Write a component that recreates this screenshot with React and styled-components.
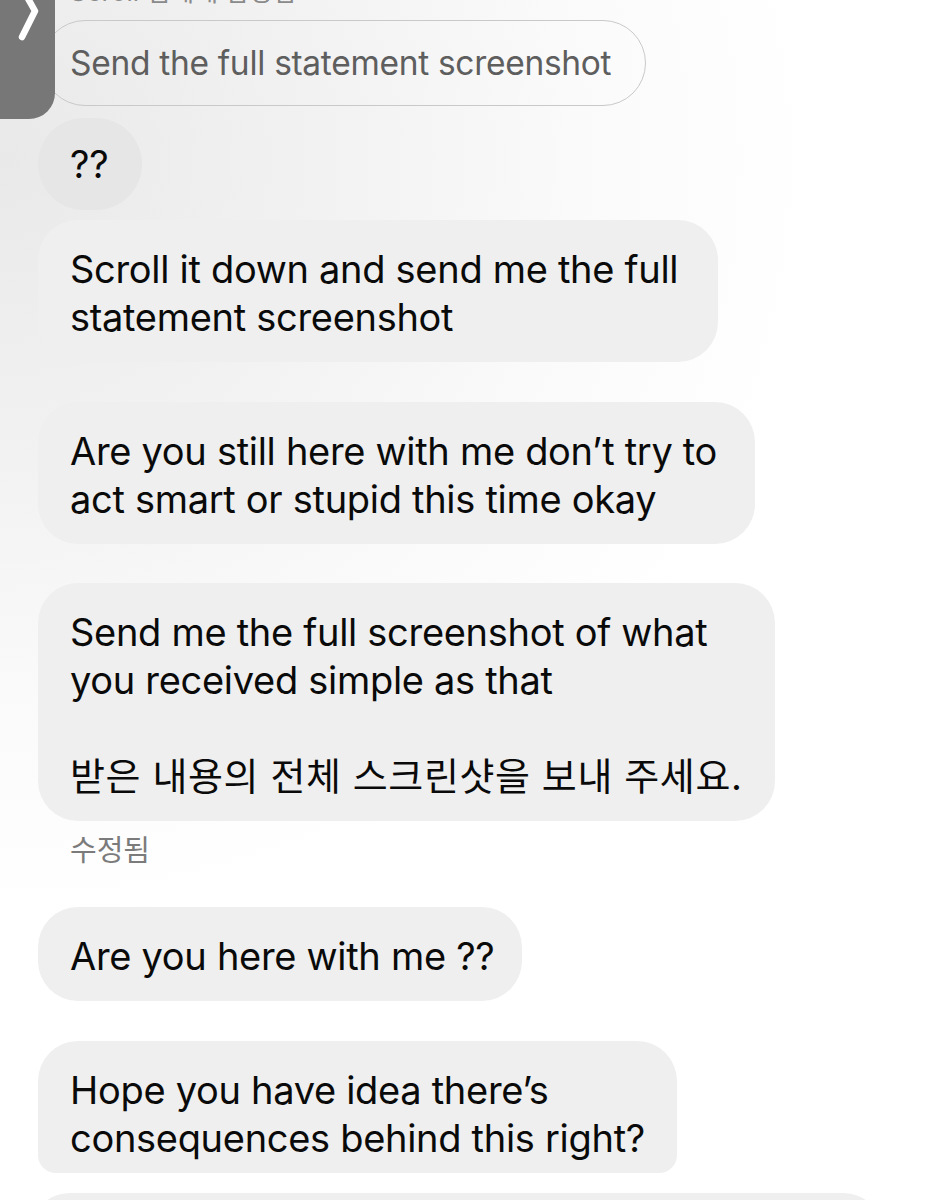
import React from 'react'
import styled, { createGlobalStyle } from 'styled-components'

const GlobalStyle = createGlobalStyle`
    html, body {
        margin: 0;
        padding: 0;
        background: #ffffff;
    }
    body {
        font-family: Inter, "Noto Sans CJK KR", sans-serif;
        -webkit-font-smoothing: antialiased;
    }
`

const Screen = styled.div`
    position: relative;
    width: 938px;
    height: 1200px;
    overflow: hidden;
    background:
        radial-gradient(ellipse 820px 760px at 0 160px, #e9e9e9 0%, #f2f2f2 40%, #fafafa 70%, #ffffff 100%);
`

const BackTab = styled.div`
    position: absolute;
    left: 0;
    top: 0;
    width: 55px;
    height: 119px;
    background: #777777;
    border-bottom-right-radius: 26px;
    z-index: 2;
`

const Thread = styled.div`
    display: flex;
    flex-direction: column;
    align-items: flex-start;
    padding-left: 38px;
`

const ReplyHeader = styled.div`
    margin-top: -24px;
    height: 32px;
    padding-left: 32px;
    font-size: 26px;
    line-height: 32px;
    color: #8a8a8a;
    white-space: nowrap;
`

const ReplyQuote = styled.div`
    margin-top: 12px;
    margin-left: 4px;
    box-sizing: border-box;
    width: 604px;
    height: 86px;
    border: 1.5px solid #c9c9c9;
    border-radius: 43px;
    padding-left: 27px;
    display: flex;
    align-items: center;
    font-size: 33.5px;
    color: #5e5e5e;
    white-space: nowrap;
    letter-spacing: -0.3px;
`

const Bubble = styled.div`
    box-sizing: border-box;
    width: ${p => p.$w}px;
    margin-top: ${p => p.$gap}px;
    padding: ${p => p.$small ? '22px 0 22px 32px' : '25px 0 21px 32px'};
    background: ${p => p.$tint || '#efefef'};
    border-radius: ${p => p.$small ? 46 : 40}px;
    font-size: 38px;
    line-height: 48px;
    color: #0a0a0a;
    letter-spacing: -0.3px;
    white-space: nowrap;
    ${p => p.$cut && `
        padding-bottom: 11px;
        border-radius: 40px 40px 18px 18px;
    `}
`

const Line = styled.div`
    height: 48px;
    letter-spacing: ${p => p.$ko ? '0.6px' : 'inherit'};
`

const Edited = styled.div`
    margin-top: 10px;
    padding-left: 32px;
    font-size: 29px;
    line-height: 34px;
    color: #7b7b7b;
    font-family: "Noto Sans CJK KR", sans-serif;
`

const NextBubble = styled.div`
    margin-top: 20px;
    margin-left: -8px;
    width: 853px;
    height: 40px;
    background: #efefef;
    border-radius: 40px 40px 0 0;
`

const Chevron = () => (
    <svg width="55" height="50" viewBox="0 0 55 50">
        <path d="M26 -5 L35 11 L22 37" fill="none" stroke="#ffffff" strokeWidth="6.5" strokeLinecap="round" strokeLinejoin="round" />
    </svg>
)

const App = () => {
    return (
        <>
            <GlobalStyle />
            <Screen>
                <BackTab>
                    <Chevron />
                </BackTab>
                <Thread>
                    <ReplyHeader>Scroll 님에게 답장함</ReplyHeader>
                    <ReplyQuote>Send the full statement screenshot</ReplyQuote>
                    <Bubble $w={104} $gap={12} $small $tint="#e6e6e6">
                        <Line>??</Line>
                    </Bubble>
                    <Bubble $w={680} $gap={10}>
                        <Line>Scroll it down and send me the full</Line>
                        <Line>statement screenshot</Line>
                    </Bubble>
                    <Bubble $w={717} $gap={40}>
                        <Line>Are you still here with me don’t try to</Line>
                        <Line>act smart or stupid this time okay</Line>
                    </Bubble>
                    <Bubble $w={737} $gap={39}>
                        <Line>Send me the full screenshot of what</Line>
                        <Line>you received simple as that</Line>
                        <Line />
                        <Line $ko>받은 내용의 전체 스크린샷을 보내 주세요.</Line>
                    </Bubble>
                    <Edited>수정됨</Edited>
                    <Bubble $w={484} $gap={42}>
                        <Line>Are you here with me ??</Line>
                    </Bubble>
                    <Bubble $w={639} $gap={40} $cut>
                        <Line>Hope you have idea there’s</Line>
                        <Line>consequences behind this right?</Line>
                    </Bubble>
                    <NextBubble />
                </Thread>
            </Screen>
        </>
    )
}

export default App
